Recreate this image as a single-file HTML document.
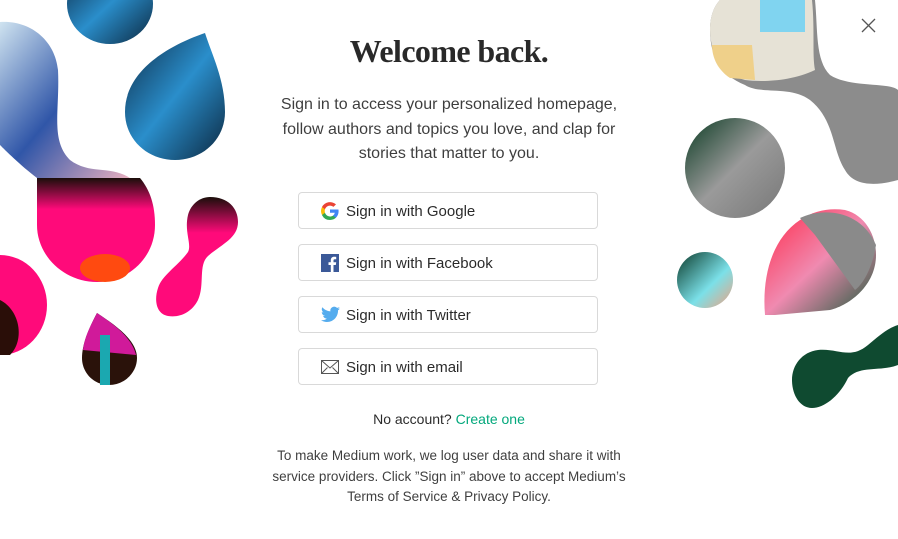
<!DOCTYPE html>
<html><head><meta charset="utf-8"><style>
*{margin:0;padding:0;box-sizing:border-box}
body{width:898px;height:539px;background:#fff;position:relative;overflow:hidden;font-family:"Liberation Sans",sans-serif;color:rgba(0,0,0,.84)}
svg.bg{position:absolute;left:0;top:0}
h1{position:absolute;top:33px;left:0;width:898px;text-align:center;font-family:"Liberation Serif",serif;font-size:32px;font-weight:bold;letter-spacing:-0.6px;color:rgba(0,0,0,.84)}
.p{position:absolute;top:93px;left:199px;width:500px;text-align:center;font-size:16px;line-height:24.5px;color:rgba(0,0,0,.76)}
.btn{position:absolute;left:298px;width:300px;height:37px;border:1px solid rgba(0,0,0,.15);border-radius:4px;font-size:15px;color:rgba(0,0,0,.84)}
.btn span{position:absolute;left:47px;top:10px}
.btn svg{position:absolute;left:22px;top:9px}
.na{position:absolute;top:411px;left:0;width:898px;text-align:center;font-size:14px;color:rgba(0,0,0,.84)}
.na a{text-decoration:none;color:#03a87c}
.ft{position:absolute;top:446px;left:199px;width:500px;text-align:center;font-size:13.5px;line-height:20.5px;color:rgba(0,0,0,.76)}
</style></head><body>
<svg class="bg" width="898" height="539" viewBox="0 0 898 539">
<defs>
<linearGradient id="bl" x1="0" y1="0" x2="1" y2="1"><stop offset="0" stop-color="#0d2a45"/><stop offset=".5" stop-color="#2a8ecb"/><stop offset="1" stop-color="#0c2840"/></linearGradient>
<linearGradient id="lb" x1="0" y1="0" x2="1" y2="1"><stop offset="0" stop-color="#cfe3f0"/><stop offset=".5" stop-color="#3056a8"/><stop offset="1" stop-color="#e9b0c0"/></linearGradient>
<linearGradient id="pk" x1="0" y1="0" x2="0" y2="1"><stop offset="0" stop-color="#1a0e0a"/><stop offset=".3" stop-color="#ff0a7a"/><stop offset="1" stop-color="#ff0a7a"/></linearGradient>
<linearGradient id="gr" x1="0" y1="0" x2="1" y2="1"><stop offset="0" stop-color="#0a3a22"/><stop offset=".5" stop-color="#9a9a9a"/><stop offset="1" stop-color="#777"/></linearGradient>
<linearGradient id="rd" x1="0" y1="0" x2="1" y2="1"><stop offset="0" stop-color="#ff2a4a"/><stop offset=".5" stop-color="#f08ab0"/><stop offset="1" stop-color="#1a5a3a"/></linearGradient>
<linearGradient id="cy" x1="0" y1="0" x2="1" y2="1"><stop offset="0" stop-color="#0b3a2a"/><stop offset=".6" stop-color="#7be0e8"/><stop offset="1" stop-color="#f0a080"/></linearGradient>
</defs>
<ellipse cx="110" cy="4" rx="43" ry="40" fill="url(#bl)"/>
<path d="M205 33 C170 45 125 70 125 112 C125 140 148 160 175 160 C202 160 225 140 225 112 C225 80 212 55 205 33Z" fill="url(#bl)"/>
<path d="M0 22 C30 20 55 40 58 70 C60 110 50 140 70 160 C90 175 110 165 130 178 L37 178 C20 165 5 150 0 145Z" fill="url(#lb)"/>
<path d="M37 178 L140 178 C150 190 155 205 155 225 C155 258 128 282 97 282 C64 282 37 256 37 225Z" fill="url(#pk)"/>
<ellipse cx="105" cy="268" rx="25" ry="14" fill="#ff4a10"/>
<path d="M210 197 C228 197 238 208 238 222 C238 238 222 244 208 256 C198 265 205 285 198 300 C192 312 180 318 168 316 C156 314 154 300 158 288 C162 275 178 266 188 252 C192 244 184 232 188 215 C191 204 200 197 210 197Z" fill="url(#pk)"/>
<ellipse cx="0" cy="305" rx="47" ry="50" fill="#ff0a7a"/>
<path d="M0 300 C20 310 25 340 10 355 L0 355Z" fill="#2a0e08"/>
<path d="M97 313 C88 330 82 345 82 358 C82 373 94 385 109 385 C124 385 137 373 137 358 C137 340 115 325 97 313Z" fill="#2a120a"/>
<path d="M97 313 C88 330 84 340 83 350 L136 355 C132 338 115 325 97 313Z" fill="#d01a9a"/>
<rect x="100" y="335" width="10" height="50" fill="#1ba8b0"/>
<path d="M760 0 L815 0 C818 30 815 60 830 75 C850 88 890 82 898 90 L898 180 C880 185 855 188 845 170 C832 150 835 120 810 100 C790 85 760 95 745 85 C720 75 710 55 710 30 C710 15 715 5 720 0Z" fill="#8c8c8c"/>
<path d="M720 0 L812 0 C815 30 812 55 815 70 C790 82 760 82 745 80 C725 75 710 55 710 30 C710 15 715 5 720 0Z" fill="#e6e2d6"/>
<rect x="760" y="0" width="45" height="32" fill="#80d4f0"/>
<path d="M712 45 L752 45 L755 80 L730 78 C718 70 712 58 712 45Z" fill="#efd08a"/>
<ellipse cx="735" cy="168" rx="50" ry="50" fill="url(#gr)"/>
<path d="M775 315 L765 315 C762 280 770 240 800 220 C815 210 830 208 845 210 C865 215 876 235 876 255 C876 285 850 305 830 310Z" fill="url(#rd)"/>
<path d="M800 218 C820 208 860 208 876 245 C872 270 862 285 855 290 L815 235Z" fill="#8a8a8a"/>
<circle cx="705" cy="280" r="28" fill="url(#cy)"/>
<path d="M898 325 L898 365 C880 372 860 365 848 378 C840 395 825 408 812 408 C800 408 792 395 792 380 C792 365 802 352 818 350 C838 348 850 360 868 345 C880 335 888 328 898 325Z" fill="#0f4a30"/>
<path d="M862 19 L875 32 M875 19 L862 32" stroke="#555" stroke-width="1.3"/>
</svg>
<h1>Welcome back.</h1>
<div class="p">Sign in to access your personalized homepage,<br>follow authors and topics you love, and clap for<br>stories that matter to you.</div>
<div class="btn" style="top:192px"><svg width="18" height="18" viewBox="0 0 18 18"><path d="M17.6 9.2c0-.6-.1-1.2-.2-1.7H9v3.3h4.8a4.1 4.1 0 0 1-1.8 2.7v2.2h2.9c1.7-1.6 2.7-3.900 2.7-6.5z" fill="#4285F4"/><path d="M9 18c2.4 0 4.5-.8 5.9-2.2L12 13.6c-.8.5-1.8.9-3 .9-2.3 0-4.3-1.6-5-3.7H1v2.3A9 9 0 0 0 9 18z" fill="#34A853"/><path d="M4 10.7a5.4 5.4 0 0 1 0-3.4V5H1a9 9 0 0 0 0 8z" fill="#FBBC05"/><path d="M9 3.6c1.3 0 2.5.5 3.4 1.3L15 2.4A9 9 0 0 0 1 5l3 2.3c.7-2.1 2.7-3.7 5-3.700z" fill="#EA4335"/></svg><span>Sign in with Google</span></div>
<div class="btn" style="top:244px"><svg width="18" height="18" viewBox="0 0 18 18"><rect width="18" height="18" fill="#3b5998"/><path d="M12.5 18v-7h2.3l.4-2.7h-2.7V6.6c0-.8.2-1.3 1.3-1.3h1.4V2.9c-.3 0-1.1-.1-2-.1-2 0-3.4 1.2-3.4 3.5v2H7.5V11h2.3v7z" fill="#fff"/></svg><span>Sign in with Facebook</span></div>
<div class="btn" style="top:296px"><svg width="19" height="17" viewBox="0 0 24 20"><path d="M24 2.4c-.9.4-1.8.6-2.8.8 1-.6 1.8-1.6 2.2-2.7-1 .6-2 1-3.100 1.2A4.9 4.9 0 0 0 11.9 6 14 14 0 0 1 1.7.9a4.9 4.9 0 0 0 1.5 6.6c-.8 0-1.6-.3-2.2-.6 0 2.4 1.7 4.4 3.9 4.8-.7.2-1.5.2-2.2.1.6 2 2.4 3.4 4.6 3.4A9.9 9.9 0 0 1 0 17.2 14 14 0 0 0 7.5 19.4c9.1 0 14-7.5 14-14v-.6c1-.7 1.8-1.6 2.5-2.4z" fill="#55acee"/></svg><span>Sign in with Twitter</span></div>
<div class="btn" style="top:348px"><svg width="18" height="14" viewBox="0 0 18 14" style="top:11px"><rect x=".5" y=".5" width="17" height="13" fill="none" stroke="#555"/><path d="M.5.5 9 8 17.5.5M.5 13.5l6-6M17.5 13.5l-6-6" fill="none" stroke="#555"/></svg><span>Sign in with email</span></div>
<div class="na">No account? <a>Create one</a></div>
<div class="ft">To make Medium work, we log user data and share it with<br>service providers. Click ”Sign in” above to accept Medium’s<br>Terms of Service &amp; Privacy Policy.</div>
</body></html>
